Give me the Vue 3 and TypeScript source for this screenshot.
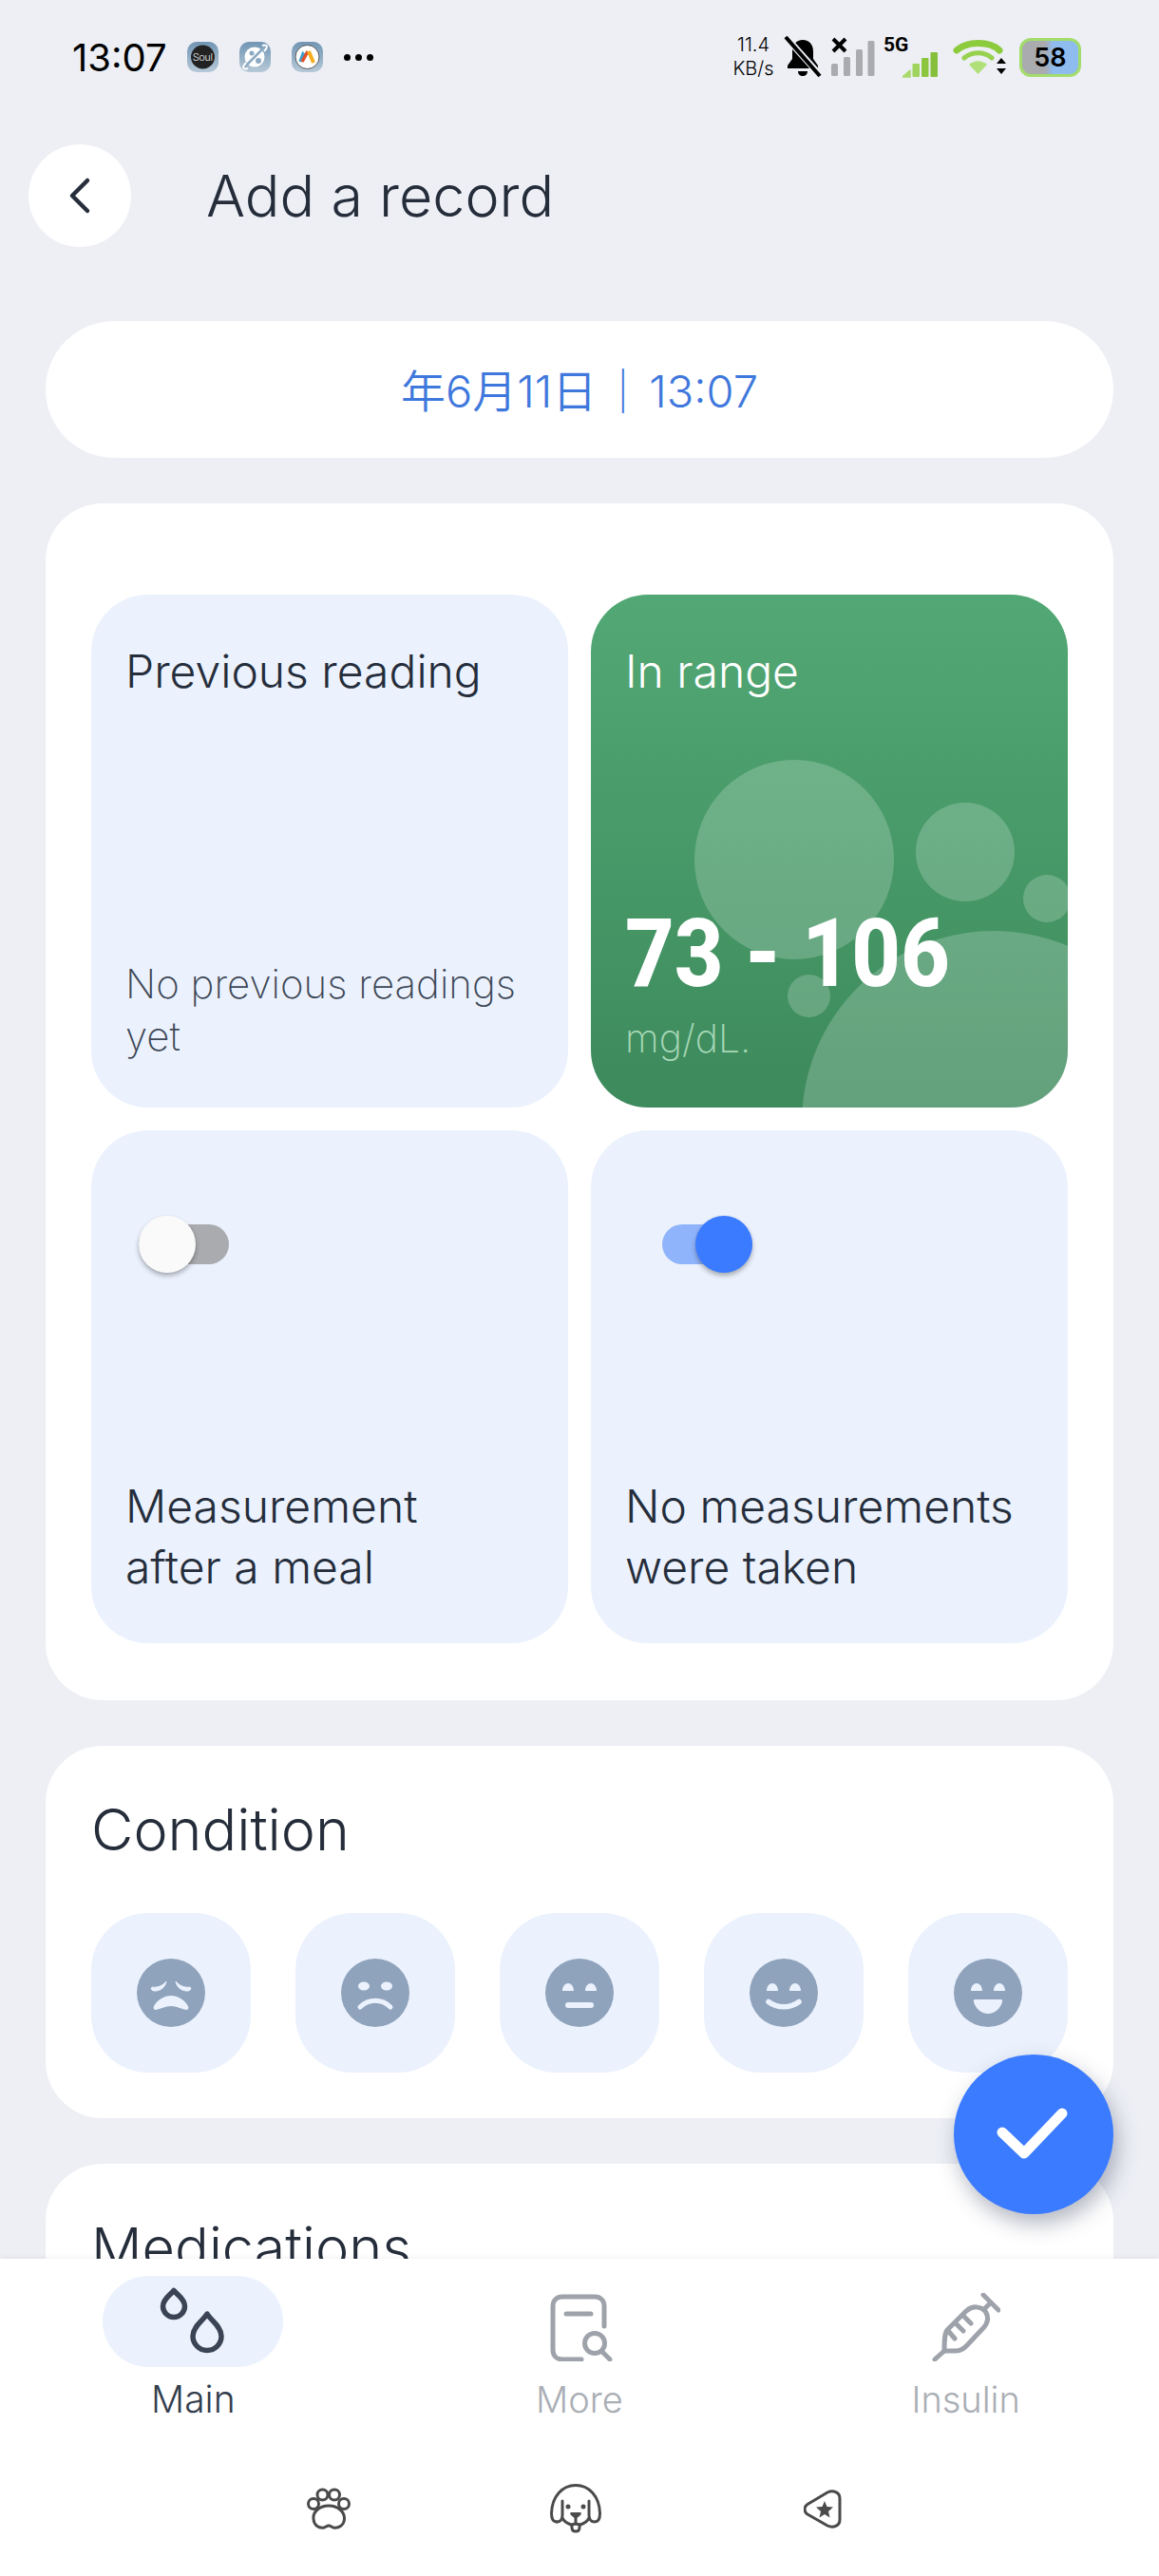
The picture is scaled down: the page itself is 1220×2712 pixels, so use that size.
<script setup lang="ts">
const faces = ['awful', 'bad', 'neutral', 'good', 'great'];
</script>

<template>
	<div class="screen">
		<div class="scroll">
			<div class="status">
				<span class="time">13:07</span>
				<div class="notif">
					<span class="app-icon">
						<svg viewBox="0 0 33 32" width="33" height="32">
							<circle cx="16.5" cy="16" r="12.5" fill="#222" />
							<text x="16.5" y="20" text-anchor="middle" font-size="11" fill="#fff" font-family="Roboto, sans-serif">Soul</text>
						</svg>
					</span>
					<span class="app-icon">
						<svg viewBox="0 0 33 32" width="33" height="32">
							<circle cx="16" cy="16" r="10.5" fill="#fff" />
							<path d="M5 27 27 5" stroke="#8eaac2" stroke-width="2.5" />
							<path d="M24 4c3-1 5 0 5 1s-1 3-3 5M9 28c-3 1-5 0-5-1s1-3 3-5" fill="none" stroke="#fff" stroke-width="2" />
							<circle cx="13" cy="12" r="2.5" fill="#8eaac2" />
							<circle cx="20" cy="20" r="3" fill="#8eaac2" />
						</svg>
					</span>
					<span class="app-icon">
						<svg viewBox="0 0 33 32" width="33" height="32">
							<circle cx="16.5" cy="16" r="12.5" fill="#fff" stroke="#333" stroke-width=".8" />
							<path d="M9 21 12 13 15 16" fill="none" stroke="#3a9fd0" stroke-width="3.5" />
							<path d="M11 21 17 10" fill="none" stroke="#e0532a" stroke-width="3.5" />
							<path d="M18 10 23 22" fill="none" stroke="#f6ae1e" stroke-width="4" />
						</svg>
					</span>
					<span class="dots"><i></i><i></i><i></i></span>
				</div>
				<div class="status-right">
					<span class="speed">11.4<br />KB/s</span>
					<svg class="bell" viewBox="0 0 40 44" width="40" height="44">
						<path d="M20 4c-7 0-11 5-11 12v8l-5 7v3h32v-3l-5-7v-8c0-7-4-12-11-12ZM15 37h10c0 3-2 5-5 5s-5-2-5-5Z" fill="#000" />
						<path d="M3 2 39 42" stroke="#edeff5" stroke-width="7" />
						<path d="M2 1 38 42" stroke="#000" stroke-width="4" />
					</svg>
					<svg class="sig1" viewBox="0 0 46 42" width="46" height="42">
						<path d="M2 2 15 15M15 2 2 15" stroke="#000" stroke-width="4" />
						<rect x="0" y="28" width="7" height="13" rx="1.5" fill="#a9abaf" />
						<rect x="13" y="21" width="7" height="20" rx="1.5" fill="#a9abaf" />
						<rect x="26" y="13" width="7" height="28" rx="1.5" fill="#a9abaf" />
						<rect x="38.500" y="4" width="7" height="37" rx="1.5" fill="#a9abaf" />
					</svg>
					<div class="sig2">
						<span class="five-g">5G</span>
						<svg viewBox="0 0 37 28" width="37" height="28">
							<path d="M0 27 8 20V27Z" fill="#a8d96b" stroke="#a8d96b" stroke-width="1.500" stroke-linejoin="round" />
							<rect x="10.500" y="13" width="7.500" height="14" rx="1" fill="#a0d45f" />
							<rect x="20" y="7" width="7.500" height="20" rx="1" fill="#8cc63f" />
							<rect x="29.500" y="1" width="7.500" height="26" rx="1" fill="#86bf3c" />
						</svg>
					</div>
					<svg class="wifi" viewBox="0 0 52 38" width="52" height="38">
						<path d="M2 12C13 2 37 2 47 12" fill="none" stroke="#8ccb3c" stroke-width="7" stroke-linecap="round" />
						<path d="M10 20C18 13 31 13 39 20" fill="none" stroke="#98d14f" stroke-width="5" stroke-linecap="round" />
						<path d="M24.500 37 15 27C21 22 28 22 34 27Z" fill="#b1e07a" />
						<path d="M49 20 54 26H44ZM49 37 54 31H44Z" fill="#000" />
					</svg>
					<div class="battery"><span>58</span></div>
				</div>
			</div>

			<header class="topbar">
				<button class="back">
					<svg viewBox="0 0 24 40" width="24" height="40">
						<path d="M20 4 4 20 20 36" fill="none" stroke="#262e3c" stroke-width="4.500" stroke-linecap="round" stroke-linejoin="round" />
					</svg>
				</button>
				<h1>Add a record</h1>
			</header>

			<div class="date-pill"><span>年6月11日<span class="sep">｜</span>13:07</span></div>

			<section class="card main-card">
				<div class="tiles">
					<div class="tile">
						<div class="tile-title">Previous reading</div>
						<div class="tile-note">No previous readings<br />yet</div>
					</div>
					<div class="tile range">
						<i class="bubble b1"></i>
						<i class="bubble b2"></i>
						<i class="bubble b3"></i>
						<i class="bubble b4"></i>
						<i class="bubble b5"></i>
						<div class="tile-title">In range</div>
						<div class="range-bottom">
							<div class="range-value"><span>73 - 106</span></div>
							<div class="range-unit">mg/dL.</div>
						</div>
					</div>
					<div class="tile">
						<div class="switch off"><i></i></div>
						<div class="tile-title">Measurement<br />after a meal</div>
					</div>
					<div class="tile">
						<div class="switch on"><i></i></div>
						<div class="tile-title">No measurements<br />were taken</div>
					</div>
				</div>
			</section>

			<section class="card condition">
				<h2>Condition</h2>
				<div class="faces">
					<button v-for="face in faces" :key="face" class="face">
						<svg viewBox="0 0 72 72" width="72" height="72">
							<circle cx="36" cy="36" r="36" fill="#90a3bc" />
							<template v-if="face === 'awful'">
								<path d="M16 30c5 1 11-1 15-6-1 6-6 10-12 10-3 0-5-2-3-4ZM56 30c-5 1-11-1-15-6 1 6 6 10 12 10 3 0 5-2 3-4Z" fill="#ebf2fd" stroke="#ebf2fd" stroke-width="1" stroke-linejoin="round" />
								<path d="M20 54c-2 0-3-2-2-4 4-7 11-11 18-11s14 4 18 11c1 2 0 4-2 4-5-1-10-4-16-4s-11 3-16 4Z" fill="#ebf2fd" />
							</template>
							<template v-else-if="face === 'bad'">
								<ellipse cx="24" cy="29" rx="6" ry="4.500" fill="#ebf2fd" />
								<ellipse cx="48" cy="29" rx="6" ry="4.500" fill="#ebf2fd" />
								<path d="M20 51C29 42 43 42 52 51" fill="none" stroke="#ebf2fd" stroke-width="5" stroke-linecap="round" />
							</template>
							<template v-else>
								<path d="M18 34c0-5 3-8 6-8s6 3 6 8ZM42 34c0-5 3-8 6-8s6 3 6 8Z" fill="#ebf2fd" />
								<rect v-if="face === 'neutral'" x="21" y="46" width="30" height="6" rx="3" fill="#ebf2fd" />
								<path v-if="face === 'good'" d="M20 45.500C29 52.500 43 52.500 52 45.500" fill="none" stroke="#ebf2fd" stroke-width="5.500" stroke-linecap="round" />
								<path v-if="face === 'great'" d="M22 43H50C51 43 51.500 44 51 45.500 49 53 43 58 36 58S23 53 21 45.500C20.500 44 21 43 22 43Z" fill="#ebf2fd" />
							</template>
						</svg>
					</button>
				</div>
			</section>

			<section class="card meds">
				<h2>Medications</h2>
			</section>
		</div>

		<button class="fab">
			<svg viewBox="0 0 84 64" width="84" height="64">
				<path d="M9 30 32 52 72 10" fill="none" stroke="#fff" stroke-width="11" stroke-linecap="round" stroke-linejoin="round" />
			</svg>
		</button>

		<nav class="bottom">
			<div class="tabs">
				<div class="tab active">
					<div class="pill">
						<svg viewBox="0 0 72 72" width="72" height="72">
							<path d="M16 3.500C19 7.500 27.500 12 27.500 20A11.500 11.500 0 0 1 4.500 20C4.500 12 13 7.500 16 3.500Z" fill="none" stroke="#3a4454" stroke-width="5.500" stroke-linejoin="round" />
							<path d="M51 28C54 34 66 41 66 51.500A15 15 0 0 1 36 51.500C36 41 48 34 51 28Z" fill="none" stroke="#3a4454" stroke-width="5.500" stroke-linejoin="round" />
						</svg>
					</div>
					<span>Main</span>
				</div>
				<div class="tab">
					<div class="pill">
						<svg class="more-icon" viewBox="0 0 72 72" width="72" height="72">
							<g fill="none" stroke="#9ea2aa" stroke-width="5" stroke-linecap="round">
								<path d="M35 70H15C9 70 5 66 5 60V14C5 8 9 4 15 4H49C55 4 59 8 59 14V35" />
								<path d="M19 22H45" />
								<circle cx="49" cy="53" r="10.500" />
								<path d="M57 62 65 70" />
							</g>
						</svg>
					</div>
					<span>More</span>
				</div>
				<div class="tab">
					<div class="pill">
						<svg viewBox="0 0 72 72" width="72" height="72">
							<g fill="none" stroke="#9ea2aa" stroke-width="5" stroke-linecap="round" stroke-linejoin="round">
								<path d="M54 2 70 18M62 10 55 17" />
								<path d="M36 19 16 39C13 43 13 52 13 61H25C31 61 34 58 37 55L53 38C60 31 60 25 56 19 51 14 43 13 36 19Z" />
								<path d="M13 61 3 70" />
								<path d="M34 25 41 32M26 33 33 40M18 41 24 48" />
							</g>
						</svg>
					</div>
					<span>Insulin</span>
				</div>
			</div>
			<div class="extras">
				<svg viewBox="0 0 46 44" width="46" height="44">
					<g fill="none" stroke="#4a4a4a" stroke-width="3">
						<circle cx="16.500" cy="7.500" r="5.500" />
						<circle cx="29" cy="7.500" r="5.500" />
						<circle cx="7" cy="17" r="5.500" />
						<circle cx="39" cy="17" r="5.500" />
						<path d="M23 19C14 19 6 25 7 33 7.500 40 13 43 18 42 20 41.500 21 40 23 40 25 40 26 41.500 28 42 33 43 39 40 39.500 33 40 25 32 19 23 19Z" />
					</g>
				</svg>
				<svg viewBox="0 0 54 52" width="54" height="52">
					<g fill="none" stroke="#4a4a4a" stroke-width="3" stroke-linecap="round">
						<path d="M7 40C3 40 1.500 36 1.500 31 2 13 13 1.500 27 1.500S52 13 52.500 31C52.500 36 51 40 47 40 43 40 41 37 41 33V18" />
						<path d="M13 18V33C13 37 11 40 7 40" />
						<path d="M13 36C15 40 19 42 22 43L27 42 32 43C35 42 39 40 41 36" />
						<path d="M27 35V42" />
						<path d="M23 43V46C23 49 25 50 27 50S31 49 31 46V43" />
					</g>
					<circle cx="19" cy="24" r="2.500" fill="#4a4a4a" />
					<circle cx="35" cy="24" r="2.500" fill="#4a4a4a" />
					<path d="M22 30H32C33 30 33 32 32 33L27 37 22 33C21 32 21 30 22 30Z" fill="#4a4a4a" />
				</svg>
				<svg viewBox="0 0 40 41" width="40" height="41">
					<path d="M4 15.500 25 3C31 0 38 3 38 9V32C38 38 31 41 25 38L4 26C0 23.500 0 18 4 15.500Z" fill="none" stroke="#4a4a4a" stroke-width="3" stroke-linejoin="round" />
					<path d="M22 12 24.500 18 31 18.500 26 23 27.500 29.500 22 26 16.500 29.500 18 23 13 18.500 19.500 18Z" fill="#4a4a4a" />
				</svg>
			</div>
		</nav>
	</div>
</template>

<style>
html,
body {
	background: #edeff5;
	margin: 0;
}
</style>

<style scoped>
.screen {
	background: #edeff5;
	color: #252d3b;
	display: flex;
	flex-direction: column;
	font-family: Inter, "Noto Sans CJK SC", sans-serif;
	font-weight: 300;
	height: 2712px;
	overflow: hidden;
	position: relative;
	width: 1220px;
}

.scroll {
	flex: 1;
	overflow: hidden;
}

button {
	border: none;
	padding: 0;
}

.status {
	align-items: center;
	color: #000;
	display: flex;
	height: 120px;
	padding: 0 82px 0 76px;
}

.time {
	font-size: 40px;
	font-weight: 400;
	width: 121px;
}

.notif {
	align-items: center;
	display: flex;
	gap: 22px;
}

.app-icon {
	background: linear-gradient(#7095b3, #b7c9d8);
	border-radius: 10px;
	display: block;
	height: 32px;
	width: 33px;
}

.app-icon svg {
	display: block;
}

.dots {
	display: flex;
	gap: 5px;
}

.dots i {
	background: #000;
	border-radius: 50%;
	height: 7px;
	width: 7px;
}

.status-right {
	align-items: center;
	display: flex;
	margin-left: auto;
}

.speed {
	font-size: 20px;
	line-height: 25px;
	text-align: center;
	width: 44px;
}

.bell {
	margin-left: 10px;
}

.sig1 {
	margin-left: 10px;
}

.sig2 {
	height: 44px;
	margin-left: 8px;
	position: relative;
	width: 58px;
}

.five-g {
	font-family: Roboto, sans-serif;
	font-size: 21px;
	font-weight: 700;
	left: 1px;
	position: absolute;
	top: -3px;
}

.sig2 svg {
	bottom: 0;
	position: absolute;
	right: 0;
}

.wifi {
	margin-left: 18px;
	overflow: visible;
}

.battery {
	align-items: center;
	background: linear-gradient(90deg, #a9abaf 41%, #8ebcee 55%);
	border: 3px solid #a4dc6c;
	border-radius: 12px;
	box-sizing: border-box;
	display: flex;
	font-size: 27px;
	font-weight: 600;
	height: 41px;
	justify-content: center;
	margin-left: 16px;
	width: 65px;
}

.topbar {
	align-items: center;
	display: flex;
	gap: 79px;
	height: 108px;
	margin: 32px 0 0 30px;
}

.back {
	align-items: center;
	background: #fff;
	border-radius: 50%;
	display: flex;
	height: 108px;
	justify-content: center;
	width: 108px;
}

h1,
h2 {
	font-size: 61px;
	font-weight: 300;
	margin: 0;
}

.date-pill {
	align-items: center;
	background: #fff;
	border-radius: 72px;
	box-sizing: border-box;
	color: #3f78dc;
	display: flex;
	font-size: 47px;
	font-weight: 350;
	height: 144px;
	justify-content: center;
	margin: 78px 48px 0;
	padding-bottom: 3px;
}

.sep {
	margin: 0 4px;
}

.card {
	background: #fff;
	border-radius: 60px;
	margin: 48px 48px 0;
}

.main-card {
	padding: 96px 48px 60px;
}

.tiles {
	display: grid;
	gap: 24px;
	grid-template-columns: 1fr 1fr;
}

.tile {
	background: #ebf2fd;
	border-radius: 60px;
	box-sizing: border-box;
	display: flex;
	flex-direction: column;
	height: 540px;
	justify-content: space-between;
	overflow: hidden;
	padding: 49px 36px 48px;
	position: relative;
}

.tile-title {
	font-size: 48px;
	line-height: 64px;
	position: relative;
}

.tile-note {
	color: #3d4756;
	font-size: 42px;
	font-weight: 200;
	line-height: 55px;
	white-space: nowrap;
}

.range {
	background: linear-gradient(#52a874, #3d8a5c);
	color: #fff;
}

.bubble {
	background: rgba(255, 255, 255, .2);
	border-radius: 50%;
	position: absolute;
}

.b1 {
	height: 210px;
	left: 109px;
	top: 174px;
	width: 210px;
}

.b2 {
	height: 104px;
	left: 342px;
	top: 219px;
	width: 104px;
}

.b3 {
	height: 50px;
	left: 455px;
	top: 295px;
	width: 50px;
}

.b4 {
	height: 45px;
	left: 207px;
	top: 400px;
	width: 45px;
}

.b5 {
	height: 404px;
	left: 222px;
	top: 354px;
	width: 404px;
}

.range-bottom {
	margin-bottom: -5px;
	position: relative;
}

.range-value {
	font-family: Roboto, sans-serif;
	font-size: 101px;
	font-weight: 800;
	line-height: 100px;
	margin-bottom: 9px;
	transform: scaleX(.89);
	transform-origin: left;
	white-space: nowrap;
}

.range-unit {
	color: #a8d8b8;
	font-size: 41px;
	font-weight: 200;
	line-height: 60px;
}

.switch {
	background: #a9abaf;
	border-radius: 21px;
	height: 42px;
	margin-top: 50px;
	position: relative;
	width: 95px;
}

.switch i {
	border-radius: 50%;
	box-shadow: 0 3px 5px rgba(0, 0, 0, .3);
	height: 60px;
	position: absolute;
	top: -9px;
	width: 60px;
}

.switch.off {
	margin-left: 14px;
}

.switch.off i {
	background: #fafafa;
	left: 0;
}

.switch.on {
	background: #90b4fb;
	margin-left: 39px;
}

.switch.on i {
	background: #3b7bff;
	right: 0;
}

.condition {
	box-sizing: border-box;
	height: 392px;
	padding: 0 48px;
}

.condition h2,
.meds h2 {
	line-height: 72px;
	padding-top: 52px;
}

.meds {
	height: 300px;
	padding: 0 48px;
}

.meds h2 {
	font-size: 59.5px;
}

.faces {
	display: flex;
	justify-content: space-between;
	margin-top: 52px;
}

.face {
	align-items: center;
	background: #ebf2fd;
	border-radius: 60px;
	display: flex;
	height: 168px;
	justify-content: center;
	width: 168px;
}

.fab {
	align-items: center;
	background: #3b7bff;
	border-radius: 50%;
	bottom: 381px;
	box-shadow: 4px 10px 22px rgba(40, 50, 80, .35);
	display: flex;
	height: 168px;
	justify-content: center;
	position: absolute;
	right: 48px;
	width: 168px;
}

.bottom {
	background: #fff;
	box-shadow: 0 -1px 6px rgba(0, 0, 0, .06);
	flex: none;
	height: 334px;
	position: relative;
}

.tabs {
	display: grid;
	grid-template-columns: repeat(3, 1fr);
	padding-top: 18px;
}

.tab {
	align-items: center;
	color: #aaaeb5;
	display: flex;
	flex-direction: column;
	font-size: 38px;
}

.tab .pill {
	align-items: center;
	border-radius: 48px;
	box-sizing: border-box;
	display: flex;
	height: 96px;
	justify-content: center;
	padding-top: 12px;
	width: 190px;
}

.more-icon {
	margin-left: 6px;
}

.tab.active {
	color: #333d4d;
	font-size: 39px;
}

.tab.active .pill {
	background: #ebf2fd;
	padding-top: 0;
}

.tab span {
	line-height: 50px;
	margin-top: 9px;
}

.extras {
	align-items: center;
	display: grid;
	grid-template-columns: repeat(3, 260px);
	justify-content: center;
	justify-items: center;
	margin-top: 64px;
	padding-right: 8px;
}
</style>
